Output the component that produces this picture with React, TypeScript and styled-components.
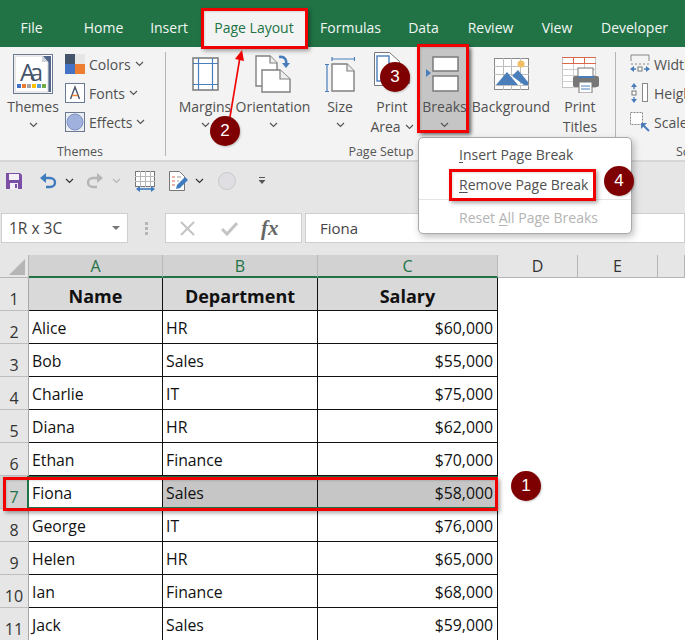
import React from "react";
import styled, { createGlobalStyle } from "styled-components";

const UI_FONT = `"Open Sans", "Noto Sans", "Liberation Sans", sans-serif`;

const GlobalStyle = createGlobalStyle`
  html, body { margin: 0; padding: 0; background: #fff; }
  * { box-sizing: border-box; }
`;

const Page = styled.div`
  position: relative;
  width: 685px;
  height: 640px;
  overflow: hidden;
  background: #e6e6e6;
  font-family: ${UI_FONT};
  color: #444;
`;

const TabBar = styled.div`
  display: flex;
  height: 47px;
  padding-top: 9px;
  background: #217346;
`;

const Tab = styled.div<{ $w: number; $ml?: number; $active?: boolean }>`
  width: ${(p) => p.$w}px;
  margin-left: ${(p) => p.$ml ?? 0}px;
  display: flex;
  align-items: center;
  justify-content: center;
  font-size: 14px;
  padding-bottom: 1px;
  color: ${(p) => (p.$active ? "#217346" : "#f1f6f3")};
  background: ${(p) => (p.$active ? "#f3f3f3" : "transparent")};
`;

const Ribbon = styled.div`
  display: flex;
  height: 115px;
  background: #f3f3f3;
  border-bottom: 2px solid #d6d6d6;
  overflow: hidden;
`;

const Group = styled.div<{ $w: number; $last?: boolean }>`
  flex: none;
  width: ${(p) => p.$w}px;
  height: 113px;
  display: flex;
  flex-direction: column;
  position: relative;
  &::after {
    content: "";
    display: ${(p) => (p.$last ? "none" : "block")};
    position: absolute;
    right: 0;
    top: 5px;
    bottom: 4px;
    width: 1px;
    background: #b5b5b5;
  }
`;

const GroupBody = styled.div<{ $pl: number }>`
  display: flex;
  height: 96px;
  padding-left: ${(p) => p.$pl}px;
`;

const GroupTitle = styled.div<{ $pr?: number; $pl?: number }>`
  height: 17px;
  text-align: center;
  font-size: 12.5px;
  line-height: 17px;
  white-space: nowrap;
  padding-right: ${(p) => p.$pr ?? 0}px;
  padding-left: ${(p) => p.$pl ?? 0}px;
  color: #555;
`;

const BigButton = styled.div<{ $w: number; $ml?: number; $pressed?: boolean }>`
  flex: none;
  width: ${(p) => p.$w}px;
  margin-left: ${(p) => p.$ml ?? 0}px;
  height: ${(p) => (p.$pressed ? "85px" : "94px")};
  display: flex;
  flex-direction: column;
  align-items: center;
  background: ${(p) => (p.$pressed ? "#c5c5c5" : "transparent")};
  box-shadow: ${(p) => (p.$pressed ? "2px 2px 3px rgba(0,0,0,.35)" : "none")};
`;

const BigIcon = styled.div<{ $pb: number }>`
  flex: none;
  height: 50px;
  width: 100%;
  display: flex;
  align-items: flex-end;
  justify-content: center;
  padding-bottom: ${(p) => p.$pb}px;
`;

const BigLabel = styled.div`
  flex: none;
  height: 20px;
  font-size: 14px;
  line-height: 20px;
  white-space: nowrap;
  display: flex;
  align-items: center;
  gap: 4px;
  color: #505050;
`;

const ChevronLine = styled.div`
  flex: none;
  height: 16px;
  display: flex;
  align-items: center;
`;

const SmallColumn = styled.div<{ $ml: number }>`
  display: flex;
  flex-direction: column;
  margin-left: ${(p) => p.$ml}px;
  padding-top: 6px;
  gap: 7px;
`;

const SmallRow = styled.div`
  height: 22px;
  display: flex;
  align-items: center;
  gap: 4px;
  font-size: 14px;
  color: #505050;
  white-space: nowrap;
`;

const Qat = styled.div`
  height: 38px;
  display: flex;
  align-items: center;
  padding-left: 6px;
`;

const QatSlot = styled.div<{ $w: number }>`
  flex: none;
  width: ${(p) => p.$w}px;
  display: flex;
  align-items: center;
`;

const FormulaRow = styled.div`
  display: flex;
  height: 30px;
  margin-top: 13px;
  padding-left: 1px;
`;

const NameBox = styled.div`
  width: 127px;
  display: flex;
  align-items: center;
  justify-content: space-between;
  padding: 0 7px 0 7px;
  background: #fff;
  border: 1px solid #cfcfcf;
  font-size: 15.5px;
  color: #444;
`;

const Caret = styled.span`
  width: 0;
  height: 0;
  border-left: 4px solid transparent;
  border-right: 4px solid transparent;
  border-top: 4px solid #777;
`;

const Grip = styled.div`
  width: 37px;
  display: flex;
  flex-direction: column;
  align-items: center;
  justify-content: center;
  gap: 2px;
  & > i {
    width: 3px;
    height: 3px;
    background: #b5b5b5;
  }
`;

const FxBox = styled.div`
  width: 137px;
  display: flex;
  align-items: center;
  background: #fff;
  border: 1px solid #cfcfcf;
  padding-left: 14px;
  gap: 26px;
`;

const FxText = styled.span`
  font-family: "Liberation Serif", serif;
  font-style: italic;
  font-weight: bold;
  font-size: 21px;
  color: #666;
  margin-left: -3px;
`;

const FormulaInput = styled.div`
  flex: 1;
  margin-left: 3px;
  display: flex;
  align-items: center;
  padding-left: 14px;
  background: #fff;
  border: 1px solid #cfcfcf;
  font-size: 15px;
  color: #444;
`;

const Sheet = styled.div`
  position: relative;
  margin-top: 12px;
  display: grid;
  grid-template-columns: 29px 134px 155px 180px 80px 80px 27px;
  grid-template-rows: 23px repeat(11, 33px);
  background: #fff;
`;

const Corner = styled.div`
  background: #e6e6e6;
  border-right: 1px solid #b5b5b5;
  border-bottom: 1px solid #b5b5b5;
  display: flex;
  align-items: flex-end;
  justify-content: flex-end;
  padding: 0 3px 2px 0;
`;

const ColHead = styled.div<{ $on?: boolean }>`
  display: flex;
  align-items: center;
  justify-content: center;
  font-size: 16px;
  background: ${(p) => (p.$on ? "#d2d2d2" : "#e6e6e6")};
  color: ${(p) => (p.$on ? "#217346" : "#333")};
  border-right: 1px solid ${(p) => (p.$on ? "#b8b8b8" : "#b5b5b5")};
  border-bottom: ${(p) => (p.$on ? "2px solid #217346" : "1px solid #b5b5b5")};
`;

const RowHead = styled.div<{ $on?: boolean }>`
  display: flex;
  align-items: flex-end;
  justify-content: center;
  padding-bottom: 1px;
  font-size: 16px;
  line-height: 20px;
  background: ${(p) => (p.$on ? "#d2d2d2" : "#e6e6e6")};
  color: ${(p) => (p.$on ? "#217346" : "#333")};
  border-right: 1px solid #a8a8a8;
  border-bottom: 1px solid #bdbdbd;
`;

const Cell = styled.div<{ $head?: boolean; $right?: boolean; $picked?: boolean }>`
  display: flex;
  align-items: center;
  padding: ${(p) => (p.$head ? "3px 3px 0" : "2px 4px 0 3px")};
  white-space: nowrap;
  color: #111;
  font-weight: ${(p) => (p.$head ? 700 : 400)};
  font-size: ${(p) => (p.$head ? "18px" : "15.8px")};
  justify-content: ${(p) =>
    p.$head ? "center" : p.$right ? "flex-end" : "flex-start"};
  background: ${(p) =>
    p.$head ? "#d9d9d9" : p.$picked ? "#c6c6c6" : "#fff"};
  border-right: 1px solid #111;
  border-bottom: 1px solid #111;
`;

const EmptyCell = styled.div`
  background: #fff;
`;

const Selection = styled.div`
  position: absolute;
  left: 27px;
  top: 221px;
  width: 471px;
  height: 33px;
  border: 2px solid #217346;
  pointer-events: none;
`;

const Menu = styled.div`
  position: absolute;
  left: 418px;
  top: 137px;
  width: 214px;
  height: 97px;
  padding-top: 1px;
  background: #fff;
  border: 1px solid #a9a9a9;
  border-radius: 5px;
  box-shadow: 2px 3px 7px rgba(0, 0, 0, 0.25);
`;

const MenuItem = styled.div<{ $off?: boolean; $rule?: boolean }>`
  height: ${(p) => (p.$rule ? "36px" : "30px")};
  padding-left: 40px;
  display: flex;
  align-items: center;
  font-size: 14px;
  color: ${(p) => (p.$off ? "#b4b4b4" : "#505050")};
  border-top: ${(p) => (p.$rule ? "1px solid #e4e4e4" : "none")};
  white-space: nowrap;
  & u {
    text-underline-offset: 2px;
  }
`;

const RedBox = styled.div<{ $x: number; $y: number; $w: number; $h: number }>`
  position: absolute;
  left: ${(p) => p.$x}px;
  top: ${(p) => p.$y}px;
  width: ${(p) => p.$w}px;
  height: ${(p) => p.$h}px;
  border: 3px solid #f00000;
  box-shadow: 2px 2px 4px rgba(0, 0, 0, 0.35), inset 1px 1px 2px rgba(0, 0, 0, 0.12);
`;

const Badge = styled.div<{ $x: number; $y: number }>`
  position: absolute;
  left: ${(p) => p.$x - 15}px;
  top: ${(p) => p.$y - 15}px;
  width: 30px;
  height: 30px;
  border-radius: 50%;
  background: #7f0000;
  color: #fff;
  display: flex;
  align-items: center;
  justify-content: center;
  font-family: "Liberation Sans", sans-serif;
  font-size: 17px;
  box-shadow: 1px 1px 2px rgba(0, 0, 0, 0.2);
`;

const Arrow = styled.svg`
  position: absolute;
  left: 220px;
  top: 45px;
`;

const Chevron = ({ color = "#555" }: { color?: string }) => (
  <svg width="9" height="6" viewBox="0 0 9 6">
    <path d="M1 1l3.5 3.5L8 1" fill="none" stroke={color} strokeWidth="1.2" />
  </svg>
);

const ThemesIcon = () => (
  <svg width="40" height="40" viewBox="0 0 40 40">
    <rect x="0.5" y="0.5" width="39" height="39" fill="#fff" stroke="#6b7a93" />
    <path d="M30 2h8v36h-3V8z" fill="#52658a" />
    <path d="M2 2h27l6 6v30H2z" fill="#fff" stroke="#d4d4d4" />
    <path d="M29 2l6 6h-6z" fill="#cfd3da" />
    <text x="7" y="27" fontFamily="Open Sans, sans-serif" fontSize="24" fill="#44546a" textLength="23">Aa</text>
    {["#4472c4", "#ed7d31", "#a5a5a5", "#ffc000", "#5b9bd5", "#70ad47"].map((c, i) => (
      <rect key={c} x={4 + i * 5} y="30" width="4" height="4" fill={c} />
    ))}
  </svg>
);

const ColorsIcon = () => (
  <svg width="20" height="20" viewBox="0 0 20 20">
    <rect width="10" height="10" fill="#44546a" />
    <rect x="10" width="10" height="10" fill="#e7e6e6" />
    <rect y="10" width="10" height="10" fill="#4472c4" />
    <rect x="10" y="10" width="10" height="10" fill="#ed7d31" />
  </svg>
);

const FontsIcon = () => (
  <svg width="20" height="20" viewBox="0 0 20 20">
    <rect x="0.5" y="0.5" width="19" height="19" fill="#fff" stroke="#6b7a93" />
    <path d="M5.5 16L10 4l4.5 12" fill="none" stroke="#44546a" strokeWidth="1.4" />
    <path d="M7 12.5h6" stroke="#ed7d31" strokeWidth="1.4" />
  </svg>
);

const EffectsIcon = () => (
  <svg width="20" height="20" viewBox="0 0 20 20">
    <rect x="0.5" y="0.5" width="19" height="19" fill="#eceef2" stroke="#6b7a93" />
    <circle cx="10" cy="10" r="8" fill="#9fb1dc" stroke="#7f93c8" />
  </svg>
);

const MarginsIcon = () => (
  <svg width="27" height="34" viewBox="0 0 27 34">
    <rect x="1" y="1" width="25" height="32" fill="#fff" stroke="#808080" strokeWidth="1.6" />
    <path d="M6.5 1v32M20.5 1v32M1 6.5h25M1 27.5h25" stroke="#4a7ebb" strokeWidth="1.2" />
  </svg>
);

const OrientationIcon = () => (
  <svg width="36" height="38" viewBox="0 0 36 38">
    <path d="M1 1h14l7 7v23H1z" fill="#fff" stroke="#808080" strokeWidth="1.4" />
    <path d="M15 1v7h7" fill="#eee" stroke="#808080" strokeWidth="1.2" />
    <path d="M7 15h18l10 9v13H7z" fill="#fff" stroke="#808080" strokeWidth="1.4" />
    <path d="M25 15v9h10" fill="#eee" stroke="#808080" strokeWidth="1.2" />
    <path d="M24 2c6-1 8 3 7 8" fill="none" stroke="#4a7ebb" strokeWidth="2.6" />
    <path d="M27 8l4 5 4-5z" fill="#4a7ebb" />
  </svg>
);

const SizeIcon = () => (
  <svg width="30" height="35" viewBox="0 0 30 35">
    <path d="M2 7v28M0 7.5h4M0 34.5h4" stroke="#4a7ebb" fill="none" strokeWidth="1.2" />
    <path d="M7 2h23M7 0v4M29.5 0v4" stroke="#4a7ebb" fill="none" strokeWidth="1.2" />
    <path d="M7 7h15l7 7v20H7z" fill="#fff" stroke="#808080" strokeWidth="1.4" />
    <path d="M22 7v7h7" fill="#eee" stroke="#808080" strokeWidth="1.2" />
  </svg>
);

const PrintAreaIcon = () => (
  <svg width="37" height="36" viewBox="0 0 37 36">
    <path d="M0.5 0.5h15l10 9v24h-25z" fill="#fff" stroke="#777" />
    <rect x="3" y="4" width="12" height="25" fill="none" stroke="#4a7ebb" strokeWidth="1.4" />
    <rect x="20" y="22" width="16" height="10" rx="1" fill="#808080" />
  </svg>
);

const BreaksIcon = () => (
  <svg width="37" height="36" viewBox="0 0 37 36">
    <rect x="7" y="1" width="25" height="14" fill="#fff" stroke="#808080" strokeWidth="1.6" />
    <rect x="7" y="20" width="25" height="15" fill="#fff" stroke="#808080" strokeWidth="1.6" />
    <path d="M0 13l5 4-5 4z" fill="#4a7ebb" />
  </svg>
);

const BackgroundIcon = () => (
  <svg width="35" height="32" viewBox="0 0 35 32">
    <rect x="0.5" y="0.5" width="34" height="31" fill="#fff" stroke="#8a8a8a" />
    <path d="M0 8.5h35M0 16.5h35M0 27.5h35M9.5 0v32M17.5 0v32M26.5 0v32" stroke="#bdbdbd" />
    <path d="M2 27l11-13 11 13z" fill="#4a7ebb" />
    <path d="M18 18l6-6 10 12v3h-4z" fill="#4a7ebb" />
    <path d="M17 18l10 9" stroke="#fff" />
    <circle cx="27" cy="6" r="3.5" fill="#f2c063" />
  </svg>
);

const PrintTitlesIcon = () => (
  <svg width="37" height="36" viewBox="0 0 37 36">
    <rect x="0.5" y="0.5" width="33" height="30" fill="#fff" stroke="#c4c4c4" />
    <path d="M0 12.5h33M0 18.5h33M0 24.5h33M11.5 6v25M22.5 6v25" stroke="#cfcfcf" />
    <path d="M0 0.5h34M0 6.5h34M11.5 0v6M22.5 0v6" stroke="#d9694a" />
    <rect x="16" y="11" width="15" height="10" fill="#fff" stroke="#777" />
    <rect x="11" y="19" width="26" height="11" rx="2" fill="#777" />
    <rect x="16" y="19" width="16" height="2" fill="#4a7ebb" />
    <rect x="17" y="25" width="13" height="11" fill="#fff" stroke="#777" />
    <path d="M19 29h9M19 32h9" stroke="#4a7ebb" />
  </svg>
);

const WidthIcon = () => (
  <svg width="20" height="20" viewBox="0 0 20 20">
    <path d="M1 7V1h18v6" fill="none" stroke="#888" />
    <path d="M1 10h18" stroke="#888" strokeDasharray="2 2" />
    <path d="M2 15h4M14 15h4" stroke="#4a7ebb" strokeWidth="1.4" />
    <path d="M4 12l-4 3 4 3zM16 12l4 3-4 3z" fill="#4a7ebb" />
    <rect x="8" y="13" width="4" height="4" fill="#fff" stroke="#777" />
  </svg>
);

const HeightIcon = () => (
  <svg width="20" height="20" viewBox="0 0 20 20">
    <rect x="12.5" y="0.5" width="5" height="18" fill="#fff" stroke="#888" />
    <path d="M4 2v4M4 14v4" stroke="#4a7ebb" strokeWidth="1.4" />
    <path d="M1 4l3-4 3 4zM1 16l3 4 3-4z" fill="#4a7ebb" />
    <rect x="2" y="8" width="4" height="4" fill="#fff" stroke="#777" />
  </svg>
);

const ScaleIcon = () => (
  <svg width="20" height="20" viewBox="0 0 20 20">
    <rect x="0.5" y="0.5" width="12" height="12" fill="#fff" stroke="#888" strokeDasharray="2 1" />
    <path d="M12 12l7 7" stroke="#4a7ebb" strokeWidth="2" />
    <path d="M11 17v-6h6z" fill="#4a7ebb" />
  </svg>
);

const SaveIcon = () => (
  <svg width="16" height="16" viewBox="0 0 16 16">
    <path d="M0 0h14l2 2v14H0z" fill="#7b4fa6" />
    <rect x="3" y="1" width="10" height="6" fill="#f3f0f7" />
    <rect x="4" y="10" width="8" height="6" fill="#f3f0f7" />
    <rect x="9" y="11" width="2" height="4" fill="#7b4fa6" />
  </svg>
);

const UndoIcon = ({ color, flip }: { color: string; flip?: boolean }) => (
  <svg width="18" height="16" viewBox="0 0 18 16" style={flip ? { transform: "scaleX(-1)" } : undefined}>
    <path d="M3 5h8c3 0 5 2 5 4.5S14 14 11 14H7" fill="none" stroke={color} strokeWidth="2.4" />
    <path d="M7 0L1 5l6 5z" fill={color} />
  </svg>
);

const PrintLayoutIcon = () => (
  <svg width="21" height="21" viewBox="0 0 21 21">
    <rect x="0.5" y="0.5" width="19" height="15" fill="#fff" stroke="#777" />
    <path d="M0 5.5h20M0 10.5h20M5.5 0v16M10.5 0v16M15.5 0v16" stroke="#b8b8b8" />
    <path d="M2 18h17" stroke="#3f7cbf" strokeWidth="1.6" />
    <path d="M5 15l-4 3 4 3zM16 15l4 3-4 3z" fill="#3f7cbf" />
  </svg>
);

const FormIcon = () => (
  <svg width="19" height="20" viewBox="0 0 19 20">
    <path d="M0.5 0.5h10l5 5v14h-15z" fill="#fff" stroke="#777" />
    <path d="M3 6h3M3 10h3M3 14h3" stroke="#d9694a" />
    <path d="M8 6h4M8 10h2" stroke="#999" />
    <path d="M7 18l1-4 8-8 3 3-8 8z" fill="#3f7cbf" />
  </svg>
);

const CornerMark = () => (
  <svg width="16" height="16" viewBox="0 0 16 16">
    <path d="M16 0v16H0z" fill="#b5b5b5" />
  </svg>
);

const XIcon = () => (
  <svg width="15" height="15" viewBox="0 0 15 15">
    <path d="M1 1l13 13M14 1L1 14" stroke="#c4c4c4" strokeWidth="2" />
  </svg>
);

const CheckIcon = () => (
  <svg width="17" height="15" viewBox="0 0 17 15">
    <path d="M1 8l5 5L16 2" fill="none" stroke="#c4c4c4" strokeWidth="3" />
  </svg>
);

const CustomizeIcon = () => (
  <svg width="8" height="9" viewBox="0 0 8 9">
    <path d="M1 0.5h6" stroke="#555" />
    <path d="M0.5 3h7L4 7z" fill="#555" />
  </svg>
);

const Dot = styled.div`
  width: 18px;
  height: 18px;
  border-radius: 50%;
  background: #e0dee2;
  border: 1px solid #c9c9c9;
`;

const rows = [
  ["Alice", "HR", "$60,000"],
  ["Bob", "Sales", "$55,000"],
  ["Charlie", "IT", "$75,000"],
  ["Diana", "HR", "$62,000"],
  ["Ethan", "Finance", "$70,000"],
  ["Fiona", "Sales", "$58,000"],
  ["George", "IT", "$76,000"],
  ["Helen", "HR", "$65,000"],
  ["Ian", "Finance", "$68,000"],
  ["Jack", "Sales", "$59,000"],
];

const App: React.FC = () => {
  return (
    <Page>
      <GlobalStyle />
      <TabBar>
        <Tab $w={63}>File</Tab>
        <Tab $w={81}>Home</Tab>
        <Tab $w={50}>Insert</Tab>
        <Tab $w={102} $ml={9} $active>Page Layout</Tab>
        <Tab $w={91}>Formulas</Tab>
        <Tab $w={55}>Data</Tab>
        <Tab $w={79}>Review</Tab>
        <Tab $w={54}>View</Tab>
        <Tab $w={101}>Developer</Tab>
      </TabBar>

      <Ribbon>
        <Group $w={166}>
          <GroupBody $pl={7}>
            <BigButton $w={52}>
              <BigIcon $pb={3}><ThemesIcon /></BigIcon>
              <BigLabel>Themes</BigLabel>
              <ChevronLine><Chevron /></ChevronLine>
            </BigButton>
            <SmallColumn $ml={6}>
              <SmallRow><ColorsIcon />Colors <Chevron /></SmallRow>
              <SmallRow><FontsIcon />Fonts <Chevron /></SmallRow>
              <SmallRow><EffectsIcon />Effects <Chevron /></SmallRow>
            </SmallColumn>
          </GroupBody>
          <GroupTitle $pr={6}>Themes</GroupTitle>
        </Group>

        <Group $w={450}>
          <GroupBody $pl={12}>
            <BigButton $w={54}>
              <BigIcon $pb={6}><MarginsIcon /></BigIcon>
              <BigLabel>Margins</BigLabel>
              <ChevronLine><Chevron /></ChevronLine>
            </BigButton>
            <BigButton $w={82}>
              <BigIcon $pb={4}><OrientationIcon /></BigIcon>
              <BigLabel>Orientation</BigLabel>
              <ChevronLine><Chevron /></ChevronLine>
            </BigButton>
            <BigButton $w={52}>
              <BigIcon $pb={5}><SizeIcon /></BigIcon>
              <BigLabel>Size</BigLabel>
              <ChevronLine><Chevron /></ChevronLine>
            </BigButton>
            <BigButton $w={52}>
              <BigIcon $pb={9}><PrintAreaIcon /></BigIcon>
              <BigLabel>Print</BigLabel>
              <BigLabel>Area <Chevron /></BigLabel>
            </BigButton>
            <BigButton $w={49} $ml={2} $pressed>
              <BigIcon $pb={5}><BreaksIcon /></BigIcon>
              <BigLabel>Breaks</BigLabel>
              <ChevronLine><Chevron /></ChevronLine>
            </BigButton>
            <BigButton $w={84}>
              <BigIcon $pb={7}><BackgroundIcon /></BigIcon>
              <BigLabel>Background</BigLabel>
            </BigButton>
            <BigButton $w={54}>
              <BigIcon $pb={4}><PrintTitlesIcon /></BigIcon>
              <BigLabel>Print</BigLabel>
              <BigLabel>Titles</BigLabel>
            </BigButton>
          </GroupBody>
          <GroupTitle $pr={20}>Page Setup</GroupTitle>
        </Group>

        <Group $w={120} $last>
          <GroupBody $pl={14}>
            <SmallColumn $ml={0}>
              <SmallRow><WidthIcon />Width:</SmallRow>
              <SmallRow><HeightIcon />Height:</SmallRow>
              <SmallRow><ScaleIcon />Scale:</SmallRow>
            </SmallColumn>
          </GroupBody>
          <GroupTitle $pl={60}>Scale to Fit</GroupTitle>
        </Group>
      </Ribbon>

      <Qat>
        <QatSlot $w={33}><SaveIcon /></QatSlot>
        <QatSlot $w={26}><UndoIcon color="#3f7cbf" /></QatSlot>
        <QatSlot $w={21}><Chevron color="#333" /></QatSlot>
        <QatSlot $w={26}><UndoIcon color="#b5b5b5" flip /></QatSlot>
        <QatSlot $w={23}><Chevron color="#b5b5b5" /></QatSlot>
        <QatSlot $w={34}><PrintLayoutIcon /></QatSlot>
        <QatSlot $w={26}><FormIcon /></QatSlot>
        <QatSlot $w={23}><Chevron color="#333" /></QatSlot>
        <QatSlot $w={40}><Dot /></QatSlot>
        <QatSlot $w={10}><CustomizeIcon /></QatSlot>
      </Qat>

      <FormulaRow>
        <NameBox>1R x 3C <Caret /></NameBox>
        <Grip><i /><i /><i /></Grip>
        <FxBox><XIcon /><CheckIcon /><FxText>fx</FxText></FxBox>
        <FormulaInput>Fiona</FormulaInput>
      </FormulaRow>

      <Sheet>
        <Corner><CornerMark /></Corner>
        <ColHead $on>A</ColHead>
        <ColHead $on>B</ColHead>
        <ColHead $on>C</ColHead>
        <ColHead>D</ColHead>
        <ColHead>E</ColHead>
        <ColHead />

        <RowHead>1</RowHead>
        <Cell $head>Name</Cell>
        <Cell $head>Department</Cell>
        <Cell $head>Salary</Cell>
        <EmptyCell /><EmptyCell /><EmptyCell />

        {rows.map((r, i) => {
          const picked = i === 5;
          return (
            <React.Fragment key={r[0]}>
              <RowHead $on={picked}>{i + 2}</RowHead>
              <Cell>{r[0]}</Cell>
              <Cell $picked={picked}>{r[1]}</Cell>
              <Cell $picked={picked} $right>{r[2]}</Cell>
              <EmptyCell /><EmptyCell /><EmptyCell />
            </React.Fragment>
          );
        })}
        <Selection />
      </Sheet>

      <Menu>
        <MenuItem><span><u>I</u>nsert Page Break</span></MenuItem>
        <MenuItem><span><u>R</u>emove Page Break</span></MenuItem>
        <MenuItem $off $rule><span>Reset <u>A</u>ll Page Breaks</span></MenuItem>
      </Menu>

      <RedBox $x={201} $y={8} $w={107} $h={41} />
      <RedBox $x={417} $y={44} $w={52} $h={89} />
      <RedBox $x={449} $y={169} $w={147} $h={32} />
      <RedBox $x={3} $y={477} $w={495} $h={34} />

      <Arrow width="30" height="75" viewBox="0 0 30 75">
        <path d="M10 72L20 12" stroke="#f00000" strokeWidth="1.6" />
        <path d="M22 5l-7 9 9 2z" fill="#f00000" />
      </Arrow>

      <Badge $x={225} $y={131}>2</Badge>
      <Badge $x={395} $y={77}>3</Badge>
      <Badge $x={619} $y={181}>4</Badge>
      <Badge $x={526} $y={486}>1</Badge>
    </Page>
  );
};

export default App;
